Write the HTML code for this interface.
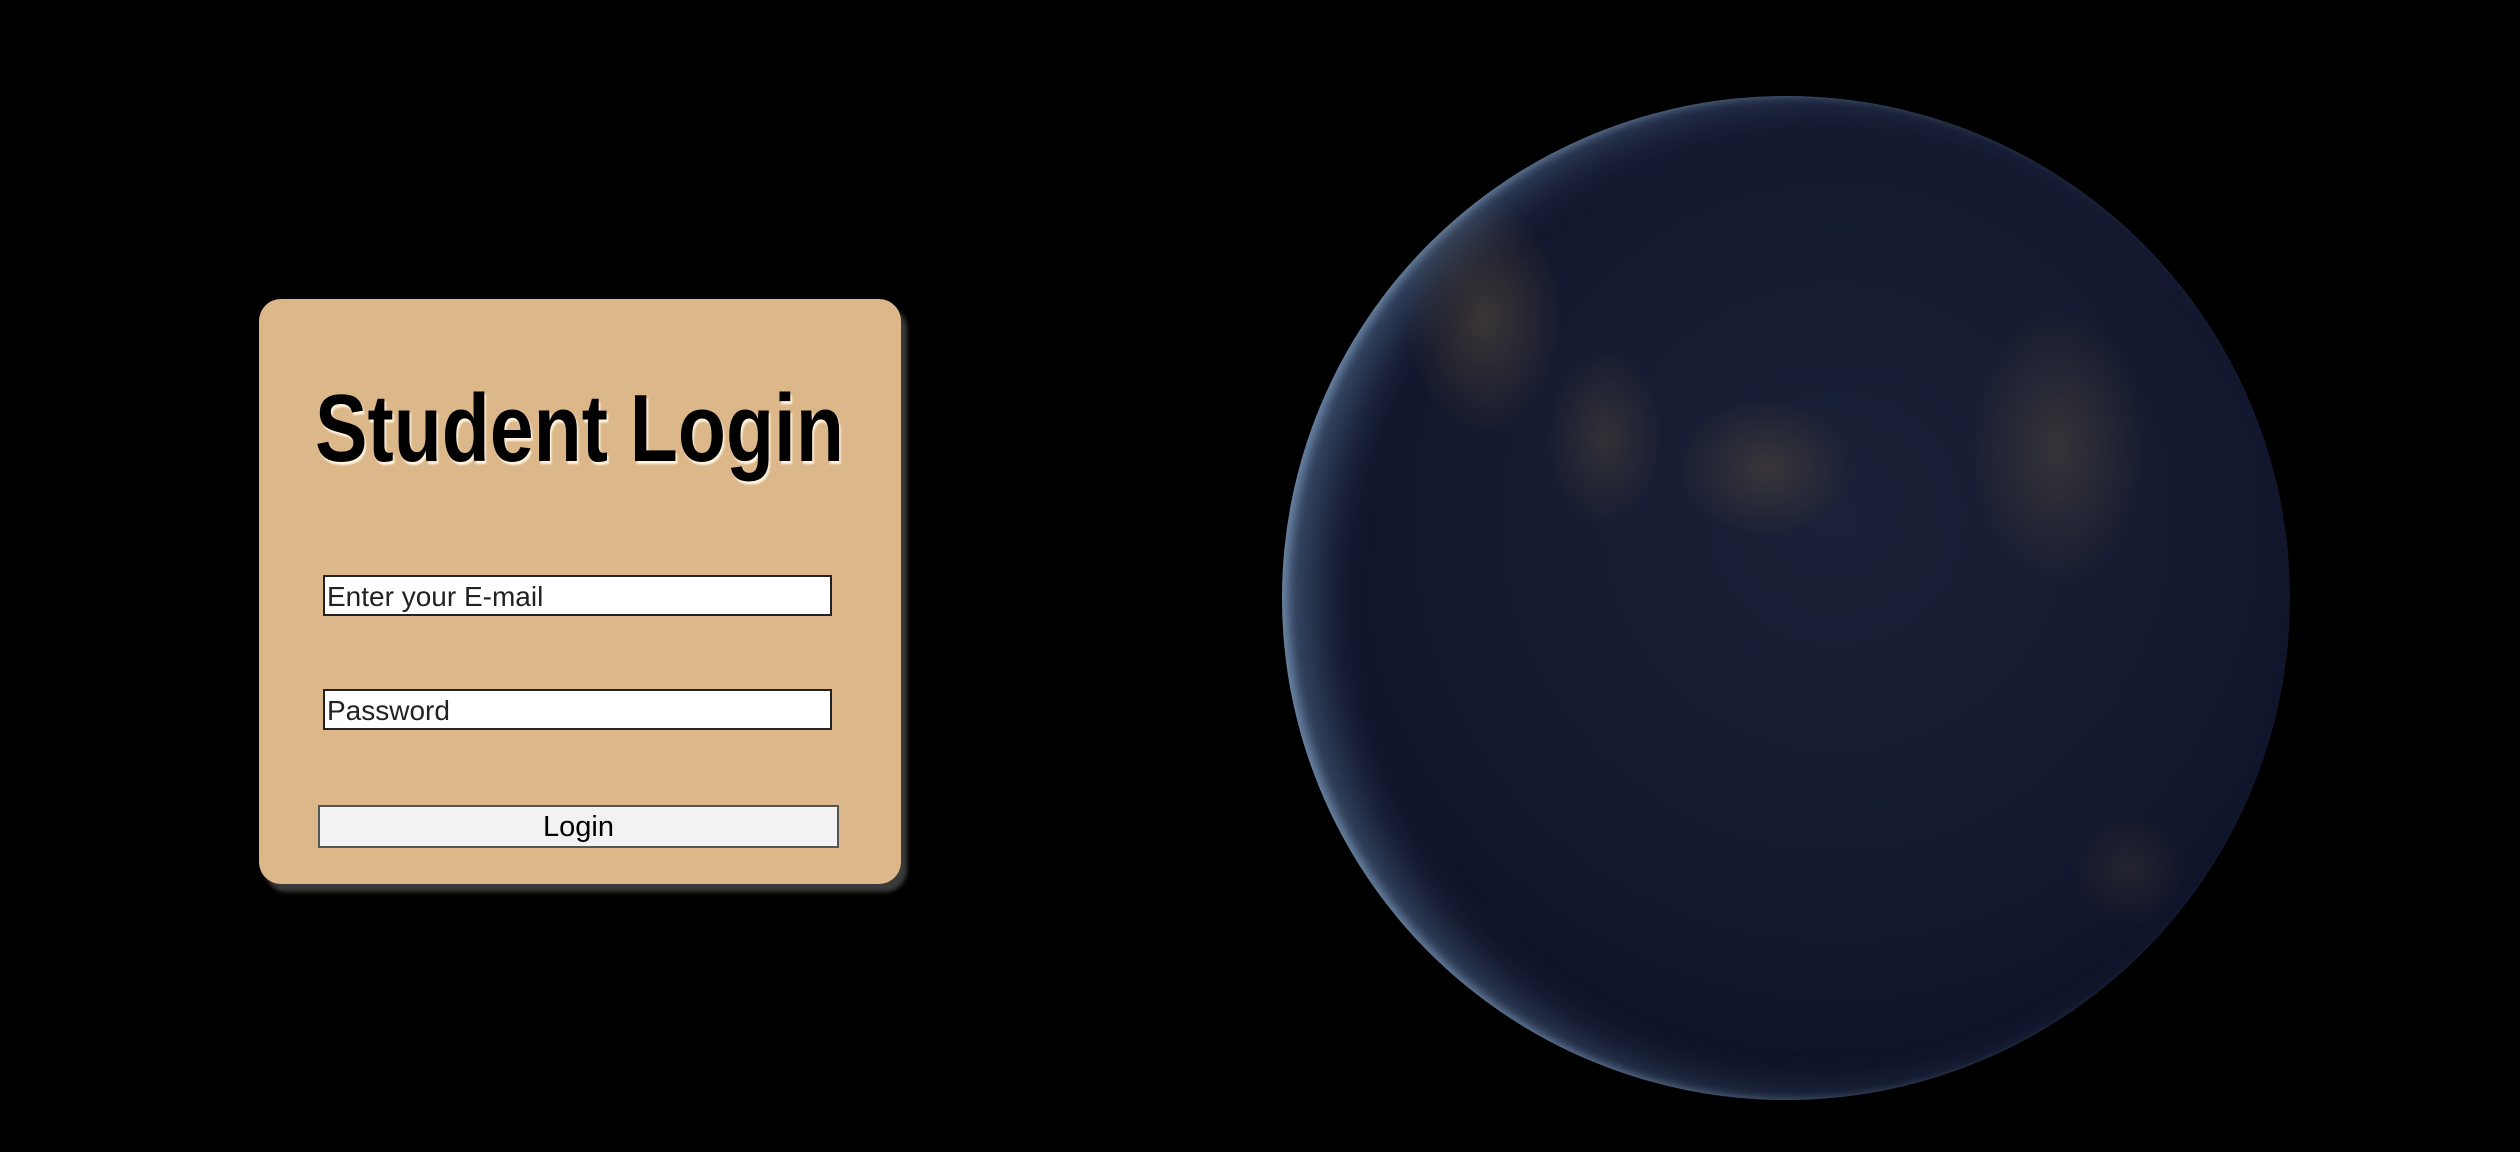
<!DOCTYPE html>
<html><head><meta charset="utf-8"><style>
html,body{margin:0;padding:0;background:#000;width:2520px;height:1152px;overflow:hidden;position:relative;font-family:"Liberation Sans",sans-serif}
.card{position:absolute;left:259px;top:299px;width:642px;height:585px;background:#dcb78a;border-radius:22px;box-shadow:6px 8px 4px #3a3a3a}
.title{position:absolute;left:315px;top:374px;width:529px;height:110px;font-weight:bold;font-size:96px;line-height:110px;color:#000;white-space:nowrap;transform-origin:left top;text-shadow:2px 3px 2px #fff4e0}
.inp{position:absolute;left:323px;width:509px;height:41px;background:#fff;border:2px solid #222;box-sizing:border-box;font-size:28px;line-height:39px;color:#222;padding-left:2px;white-space:nowrap}
.btn{position:absolute;left:318px;top:805px;width:521px;height:43px;background:#f2f2f2;border:2px solid #555;box-sizing:border-box;font-size:29px;line-height:41px;text-align:center;color:#000}
.globe{position:absolute;left:1282px;top:96px;width:1008px;height:1004px;border-radius:50%;
background:radial-gradient(circle at 55% 42%,#1b2138 0%,#161b31 40%,#10142a 65%,#0b0e1e 85%,#06070f 100%);
box-shadow:inset 40px 0 50px -10px rgba(120,160,200,.45),inset 8px 0 10px -2px rgba(170,200,230,.55)}
.lights{position:absolute;left:0;top:0;width:100%;height:100%;border-radius:50%;
background:radial-gradient(ellipse 80px 120px at 20% 22%,rgba(200,160,80,.22),transparent),
radial-gradient(ellipse 90px 70px at 48% 37%,rgba(200,160,80,.18),transparent),
radial-gradient(ellipse 90px 140px at 77% 35%,rgba(200,160,80,.18),transparent),
radial-gradient(ellipse 60px 90px at 32% 34%,rgba(200,160,80,.16),transparent),
radial-gradient(ellipse 60px 60px at 84% 77%,rgba(200,160,80,.1),transparent)}
</style></head><body>
<div class="card"></div>
<div class="title" id="t">Student Login</div>
<div class="inp" style="top:575px">Enter your E-mail</div>
<div class="inp" style="top:689px">Password</div>
<div class="btn">Login</div>
<div class="globe"><div class="lights"></div></div>
<script>
var t=document.getElementById('t');var r=document.createRange();r.selectNodeContents(t);var w=r.getBoundingClientRect().width;t.style.transform='scaleX('+(529/w)+')';
</script>
</body></html>
